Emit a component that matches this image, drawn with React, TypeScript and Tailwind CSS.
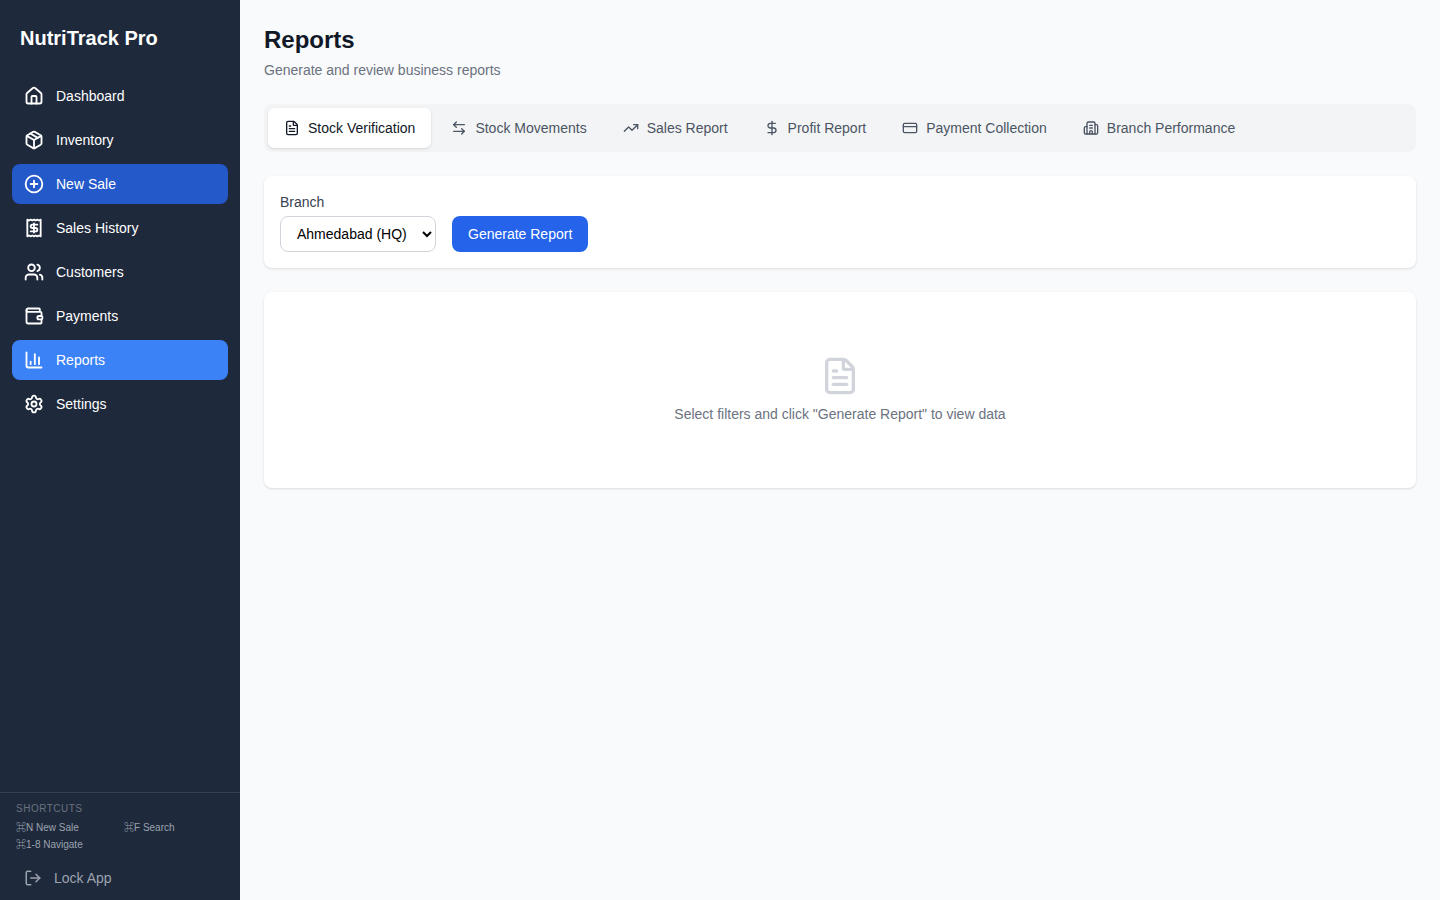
import React from "react";
import { House, Package, CirclePlus, Users, Wallet, ChartColumn, Settings, LogOut, FileText, ArrowLeftRight, TrendingUp, DollarSign, CreditCard, Building2, Receipt } from "lucide-react";

const nav = [
  { label: "Dashboard", Icon: House, cls: "" },
  { label: "Inventory", Icon: Package, cls: "" },
  { label: "New Sale", Icon: CirclePlus, cls: "bg-[#2459c9]" },
  { label: "Sales History", Icon: Receipt, cls: "" },
  { label: "Customers", Icon: Users, cls: "" },
  { label: "Payments", Icon: Wallet, cls: "" },
  { label: "Reports", Icon: ChartColumn, cls: "bg-[#3b82f6]" },
  { label: "Settings", Icon: Settings, cls: "" },
];

const tabs = [
  { label: "Stock Verification", Icon: FileText, active: true },
  { label: "Stock Movements", Icon: ArrowLeftRight, active: false },
  { label: "Sales Report", Icon: TrendingUp, active: false },
  { label: "Profit Report", Icon: DollarSign, active: false },
  { label: "Payment Collection", Icon: CreditCard, active: false },
  { label: "Branch Performance", Icon: Building2, active: false },
];

export default function App() {
  return (
    <div className="flex h-screen overflow-hidden bg-[#f9fafb] font-['Liberation_Sans','Noto_Sans_CJK_JP',sans-serif] antialiased">
      <aside className="flex w-60 shrink-0 flex-col bg-[#1e293b] text-white">
        <div className="px-5 pt-6 pb-3">
          <h1 className="text-xl font-bold leading-7">NutriTrack Pro</h1>
        </div>
        <nav className="flex flex-1 flex-col gap-1 px-3 pt-3">
          {nav.map(({ label, Icon, cls }) => (
            <div key={label} className={`flex h-10 items-center gap-3 rounded-lg px-3 text-sm text-white ${cls}`}>
              <Icon className="h-5 w-5" strokeWidth={2.2} />
              <span>{label}</span>
            </div>
          ))}
        </nav>
        <div className="border-t border-[#334155] px-4 pt-2 pb-[2px]">
          <div className="text-[10px] leading-[15px] tracking-wider text-[#6b7280]">SHORTCUTS</div>
          <div className="mt-1 grid grid-cols-2 gap-x-2 gap-y-0.5 text-[10px] leading-[15px] text-[#9ca3af]">
            <span>⌘N New Sale</span>
            <span>⌘F Search</span>
            <span>⌘1-8 Navigate</span>
          </div>
          <div className="mt-[6px] flex h-10 items-center gap-3 px-2 text-sm text-[#9ca3af]">
            <LogOut className="h-[18px] w-[18px]" />
            <span>Lock App</span>
          </div>
        </div>
      </aside>
      <main className="flex-1 p-6">
        <h2 className="text-2xl font-bold text-[#111827]">Reports</h2>
        <p className="mt-1 text-sm text-[#6b7280]">Generate and review business reports</p>
        <div className="mt-6 flex gap-1 rounded-lg bg-[#f3f4f6] p-1">
          {tabs.map(({ label, Icon, active }) => (
            <div key={label} className={`flex h-10 items-center gap-2 rounded-md px-4 text-sm ${active ? "bg-white text-[#111827] shadow-sm" : "text-[#4b5563]"}`}>
              <Icon className="h-4 w-4" />
              <span>{label}</span>
            </div>
          ))}
        </div>
        <div className="mt-6 rounded-lg bg-white p-4 shadow-sm">
          <label className="mb-1 block text-sm text-[#374151]">Branch</label>
          <div className="flex items-center gap-4">
            <select className="h-9 rounded-lg border border-[#d1d5db] bg-white px-3 text-sm text-black">
              <option>Ahmedabad (HQ)</option>
            </select>
            <button className="h-9 rounded-lg bg-[#2563eb] px-4 text-sm text-white">Generate Report</button>
          </div>
        </div>
        <div className="mt-6 flex flex-col items-center rounded-lg bg-white py-16 shadow-sm">
          <FileText className="mb-2 h-10 w-10 text-[#d1d5db]" />
          <p className="text-sm text-[#6b7280]">Select filters and click "Generate Report" to view data</p>
        </div>
      </main>
    </div>
  );
}
